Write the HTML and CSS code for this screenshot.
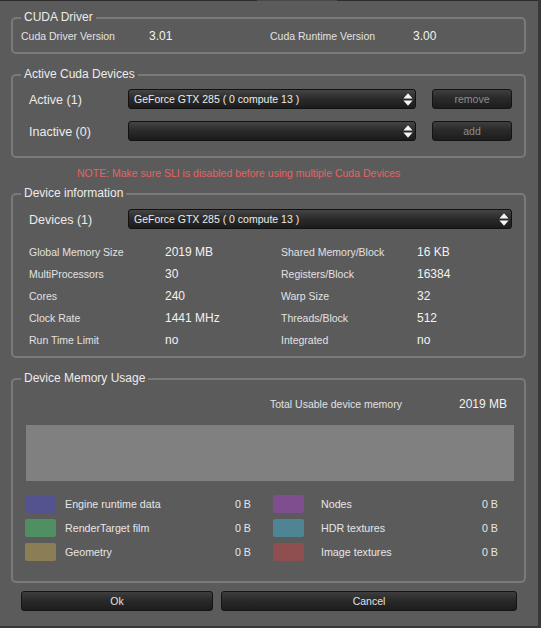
FILE: index.html
```html
<!DOCTYPE html>
<html>
<head>
<meta charset="utf-8">
<title>CUDA Devices</title>
<link rel="stylesheet" href="styles.css">
</head>
<body>
<div class="window">
  <div class="topline"></div>
  <div class="content">

    <section class="group g-driver">
      <div class="title">CUDA Driver</div>
      <div class="driver-row">
        <span class="small">Cuda Driver Version</span><span class="val">3.01</span>
        <span class="small">Cuda Runtime Version</span><span class="val">3.00</span>
      </div>
    </section>

    <section class="group g-active">
      <div class="title">Active Cuda Devices</div>
      <div class="dev-row first">
        <span class="lbl">Active (1)</span>
        <div class="combo combo-short">
          <span class="combo-text">GeForce GTX 285 ( 0 compute 13 )</span>
          <svg class="arrows" width="10" height="13" viewBox="0 0 10 13"><path d="M5 0.3 L9.6 5.4 H0.4 Z M0.4 7.6 H9.6 L5 12.7 Z" fill="#f4f4f4"/></svg>
        </div>
        <button class="btn btn-dis btn-side">remove</button>
      </div>
      <div class="dev-row second">
        <span class="lbl">Inactive (0)</span>
        <div class="combo combo-short">
          <span class="combo-text"></span>
          <svg class="arrows" width="10" height="13" viewBox="0 0 10 13"><path d="M5 0.3 L9.6 5.4 H0.4 Z M0.4 7.6 H9.6 L5 12.7 Z" fill="#f4f4f4"/></svg>
        </div>
        <button class="btn btn-dis btn-side">add</button>
      </div>
    </section>

    <div class="note">NOTE: Make sure SLI is disabled before using multiple Cuda Devices</div>

    <section class="group g-info">
      <div class="title">Device information</div>
      <div class="dev-row first">
        <span class="lbl">Devices (1)</span>
        <div class="combo combo-long">
          <span class="combo-text">GeForce GTX 285 ( 0 compute 13 )</span>
          <svg class="arrows" width="10" height="13" viewBox="0 0 10 13"><path d="M5 0.3 L9.6 5.4 H0.4 Z M0.4 7.6 H9.6 L5 12.7 Z" fill="#f4f4f4"/></svg>
        </div>
      </div>
      <div class="info-grid">
        <span class="small">Global Memory Size</span><span class="val">2019 MB</span>
        <span class="small">Shared Memory/Block</span><span class="val">16 KB</span>
        <span class="small">MultiProcessors</span><span class="val">30</span>
        <span class="small">Registers/Block</span><span class="val">16384</span>
        <span class="small">Cores</span><span class="val">240</span>
        <span class="small">Warp Size</span><span class="val">32</span>
        <span class="small">Clock Rate</span><span class="val">1441 MHz</span>
        <span class="small">Threads/Block</span><span class="val">512</span>
        <span class="small">Run Time Limit</span><span class="val">no</span>
        <span class="small">Integrated</span><span class="val">no</span>
      </div>
    </section>

    <section class="group g-mem">
      <div class="title">Device Memory Usage</div>
      <div class="total-row">
        <span class="small">Total Usable device memory</span>
        <span class="val total-val">2019 MB</span>
      </div>
      <div class="bar"></div>
      <div class="legend">
        <div class="item col1"><span class="swatch sw-engine"></span><span class="leg-lbl">Engine runtime data</span><span class="leg-val">0 B</span></div>
        <div class="item col2"><span class="swatch sw-nodes"></span><span class="leg-lbl">Nodes</span><span class="leg-val">0 B</span></div>
        <div class="item col1"><span class="swatch sw-film"></span><span class="leg-lbl">RenderTarget film</span><span class="leg-val">0 B</span></div>
        <div class="item col2"><span class="swatch sw-hdr"></span><span class="leg-lbl">HDR textures</span><span class="leg-val">0 B</span></div>
        <div class="item col1"><span class="swatch sw-geo"></span><span class="leg-lbl">Geometry</span><span class="leg-val">0 B</span></div>
        <div class="item col2"><span class="swatch sw-img"></span><span class="leg-lbl">Image textures</span><span class="leg-val">0 B</span></div>
      </div>
    </section>

    <div class="actions">
      <button class="btn btn-ok">Ok</button>
      <button class="btn btn-cancel">Cancel</button>
    </div>

  </div>
</div>
</body>
</html>
```

FILE: styles.css
```css
html, body {
  margin: 0;
  padding: 0;
  background: #5b5b5b;
}

body {
  font-family: "Liberation Sans", Arial, sans-serif;
  color: #e4e4e4;
}

.window {
  width: 541px;
  height: 628px;
  box-sizing: border-box;
  border-right: 3px solid #383838;
  border-bottom: 2px solid #383838;
  background: #5b5b5b;
  overflow: hidden;
}

.topline {
  height: 1px;
  background: linear-gradient(to right, #2c2c2c 0 257px, #484848 257px 337px, #2c2c2c 337px);
}

.content {
  padding: 16px 0 0 11px;
}

.group {
  width: 515px;
  box-sizing: border-box;
  border: 2px solid #7a7a7a;
  border-radius: 5px;
}

.title {
  width: fit-content;
  margin: -9px 0 0 8px;
  padding: 0 3px;
  background: #5b5b5b;
  font-size: 12px;
  line-height: 14px;
  color: #ececec;
}

.small {
  font-size: 10.5px;
  color: #e2e2e2;
}

.val {
  font-size: 12px;
  color: #f2f2f2;
}

/* CUDA driver */
.g-driver {
  padding-bottom: 6px;
}

.driver-row {
  margin-top: 2px;
  height: 20px;
  padding-left: 8px;
  display: grid;
  grid-template-columns: 128px 121px 143px auto;
  align-items: center;
}

/* active devices */
.g-active {
  margin-top: 20px;
  padding: 0 0 15px 16px;
}

.g-active .title,
.g-info .title {
  margin-left: -8px;
}

.dev-row {
  display: flex;
  align-items: center;
  height: 20px;
}

.dev-row.first {
  margin-top: 8px;
}

.dev-row.second {
  margin-top: 12px;
}

.lbl {
  width: 99px;
  font-size: 12.5px;
  color: #ececec;
  padding-top: 2px;
}

.combo {
  height: 20px;
  box-sizing: border-box;
  border: 1px solid #111;
  border-radius: 3px;
  background: linear-gradient(to bottom, #454545 0%, #2c2c2c 45%, #1b1b1b 100%);
  display: flex;
  align-items: center;
  justify-content: space-between;
  padding: 0 2px 0 5px;
}

.combo-short {
  width: 288px;
}

.combo-long {
  width: 384px;
}

.combo-text {
  font-size: 10.5px;
  color: #ececec;
  white-space: nowrap;
}

.arrows {
  display: block;
}

.btn {
  font-family: "Liberation Sans", Arial, sans-serif;
  height: 20px;
  box-sizing: border-box;
  border: 1px solid #141414;
  border-radius: 3px;
  background: linear-gradient(to bottom, #3e3e3e 0%, #2a2a2a 45%, #1d1d1d 100%);
  font-size: 10.5px;
  color: #e2e2e2;
  padding: 0;
  margin: 0;
}

.btn-dis {
  color: #8e8e8e;
}

.btn-side {
  width: 80px;
  margin-left: 16px;
}

/* note */
.note {
  padding: 8px 0 13px 66px;
  font-size: 10.5px;
  line-height: 14px;
  color: #e36464;
}

/* device information */
.g-info {
  padding: 0 0 5px 16px;
}

.g-info .dev-row.first {
  margin-top: 9px;
}

.info-grid {
  margin-top: 12px;
  display: grid;
  grid-template-columns: 136px 116px 136px auto;
  grid-auto-rows: 22px;
  align-items: center;
}

/* memory usage */
.g-mem {
  margin-top: 20px;
  padding: 0 10px 20px 13px;
}

.g-mem .title {
  margin-left: -5px;
}

.total-row {
  margin-top: 12px;
  height: 14px;
  display: flex;
  align-items: center;
  padding: 0 7px 0 244px;
}

.total-val {
  margin-left: auto;
}

.bar {
  margin-top: 14px;
  height: 56px;
  background: #808080;
}

.legend {
  margin: 14px 0 0 -1px;
  display: grid;
  grid-template-columns: 226px 225px;
  column-gap: 22px;
  row-gap: 6px;
}

.item {
  display: flex;
  align-items: center;
  height: 18px;
}

.swatch {
  width: 31px;
  height: 18px;
  border-radius: 2px;
  flex: none;
}

.leg-lbl {
  flex: 1;
  font-size: 10.7px;
  color: #e6e6e6;
}

.col1 .leg-lbl {
  margin-left: 9px;
}

.col2 .leg-lbl {
  margin-left: 17px;
}

.leg-val {
  font-size: 10.7px;
  color: #e6e6e6;
}

.sw-engine { background: #54538f; }
.sw-film { background: #4f8f61; }
.sw-geo { background: #8b7e54; }
.sw-nodes { background: #7e4e8f; }
.sw-hdr { background: #4f8494; }
.sw-img { background: #8f4f50; }

/* bottom buttons */
.actions {
  margin-top: 8px;
  padding-left: 10px;
  display: flex;
  gap: 8px;
}

.btn-ok {
  width: 192px;
}

.btn-cancel {
  width: 296px;
}
```
